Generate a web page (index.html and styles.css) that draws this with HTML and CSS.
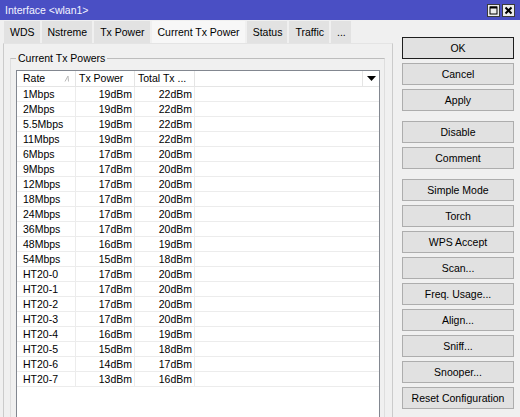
FILE: index.html
```html
<!DOCTYPE html>
<html>
<head>
<meta charset="utf-8">
<link rel="stylesheet" href="styles.css">
</head>
<body>
<div class="window">
  <div class="titlebar">
    <span class="title">Interface &lt;wlan1&gt;</span>
    <div class="controls">
      <svg class="ctl" width="13" height="13" viewBox="0 0 13 13"><rect x="0.5" y="0.5" width="12" height="12" fill="#ececec" stroke="#3a3a3a"/><rect x="3" y="3" width="7" height="7" fill="none" stroke="#000" stroke-width="1"/><line x1="3" y1="3.5" x2="10" y2="3.5" stroke="#000" stroke-width="2"/></svg>
      <svg class="ctl" width="13" height="13" viewBox="0 0 13 13"><rect x="0.5" y="0.5" width="12" height="12" fill="#ececec" stroke="#3a3a3a"/><path d="M3.5 3.5 L9.5 9.5 M9.5 3.5 L3.5 9.5" stroke="#000" stroke-width="2"/></svg>
    </div>
  </div>
  <div class="main">
    <div class="left">
      <div class="tabs">
        <div class="tab">WDS</div>
        <div class="tab">Nstreme</div>
        <div class="tab">Tx Power</div>
        <div class="tab active">Current Tx Power</div>
        <div class="tab">Status</div>
        <div class="tab">Traffic</div>
        <div class="tab">...</div>
      </div>
      <div class="panel">
        <fieldset class="group">
          <legend>Current Tx Powers</legend>
          <div class="list">
            <div class="hrow">
              <div class="hc c1">Rate<svg class="sort" width="6" height="7" viewBox="0 0 6 7"><path d="M1 6.5 L4 1 L4.5 6.5" fill="none" stroke="#b8b8b8" stroke-width="1"/></svg></div>
              <div class="hc">Tx Power</div>
              <div class="hc">Total Tx ...</div>
              <div class="hc"></div>
              <div class="hc drop"><svg width="9" height="5" viewBox="0 0 9 5"><path d="M0 0 H9 L4.5 5 Z" fill="#000"/></svg></div>
            </div>
            <div class="row"><div class="c c1">1Mbps</div><div class="c num">19dBm</div><div class="c num">22dBm</div><div class="c last"></div></div>
            <div class="row"><div class="c c1">2Mbps</div><div class="c num">19dBm</div><div class="c num">22dBm</div><div class="c last"></div></div>
            <div class="row"><div class="c c1">5.5Mbps</div><div class="c num">19dBm</div><div class="c num">22dBm</div><div class="c last"></div></div>
            <div class="row"><div class="c c1">11Mbps</div><div class="c num">19dBm</div><div class="c num">22dBm</div><div class="c last"></div></div>
            <div class="row"><div class="c c1">6Mbps</div><div class="c num">17dBm</div><div class="c num">20dBm</div><div class="c last"></div></div>
            <div class="row"><div class="c c1">9Mbps</div><div class="c num">17dBm</div><div class="c num">20dBm</div><div class="c last"></div></div>
            <div class="row"><div class="c c1">12Mbps</div><div class="c num">17dBm</div><div class="c num">20dBm</div><div class="c last"></div></div>
            <div class="row"><div class="c c1">18Mbps</div><div class="c num">17dBm</div><div class="c num">20dBm</div><div class="c last"></div></div>
            <div class="row"><div class="c c1">24Mbps</div><div class="c num">17dBm</div><div class="c num">20dBm</div><div class="c last"></div></div>
            <div class="row"><div class="c c1">36Mbps</div><div class="c num">17dBm</div><div class="c num">20dBm</div><div class="c last"></div></div>
            <div class="row"><div class="c c1">48Mbps</div><div class="c num">16dBm</div><div class="c num">19dBm</div><div class="c last"></div></div>
            <div class="row"><div class="c c1">54Mbps</div><div class="c num">15dBm</div><div class="c num">18dBm</div><div class="c last"></div></div>
            <div class="row"><div class="c c1">HT20-0</div><div class="c num">17dBm</div><div class="c num">20dBm</div><div class="c last"></div></div>
            <div class="row"><div class="c c1">HT20-1</div><div class="c num">17dBm</div><div class="c num">20dBm</div><div class="c last"></div></div>
            <div class="row"><div class="c c1">HT20-2</div><div class="c num">17dBm</div><div class="c num">20dBm</div><div class="c last"></div></div>
            <div class="row"><div class="c c1">HT20-3</div><div class="c num">17dBm</div><div class="c num">20dBm</div><div class="c last"></div></div>
            <div class="row"><div class="c c1">HT20-4</div><div class="c num">16dBm</div><div class="c num">19dBm</div><div class="c last"></div></div>
            <div class="row"><div class="c c1">HT20-5</div><div class="c num">15dBm</div><div class="c num">18dBm</div><div class="c last"></div></div>
            <div class="row"><div class="c c1">HT20-6</div><div class="c num">14dBm</div><div class="c num">17dBm</div><div class="c last"></div></div>
            <div class="row"><div class="c c1">HT20-7</div><div class="c num">13dBm</div><div class="c num">16dBm</div><div class="c last"></div></div>
          </div>
        </fieldset>
      </div>
    </div>
    <div class="buttons">
      <button class="btn default">OK</button>
      <button class="btn">Cancel</button>
      <button class="btn">Apply</button>
      <button class="btn sep">Disable</button>
      <button class="btn">Comment</button>
      <button class="btn sep">Simple Mode</button>
      <button class="btn">Torch</button>
      <button class="btn">WPS Accept</button>
      <button class="btn">Scan...</button>
      <button class="btn">Freq. Usage...</button>
      <button class="btn">Align...</button>
      <button class="btn">Sniff...</button>
      <button class="btn">Snooper...</button>
      <button class="btn">Reset Configuration</button>
    </div>
  </div>
</div>
</body>
</html>
```
FILE: styles.css
```css
* { box-sizing: border-box; }
html, body { margin: 0; padding: 0; }
body {
  background: #f0f0f0;
  font-family: "Liberation Sans", Arial, sans-serif;
  font-size: 10.5px;
  color: #000;
}
.window {
  width: 520px;
  height: 417px;
  overflow: hidden;
  background: #f0f0f0;
}
.titlebar {
  height: 20px;
  background: #4a4fc4;
  display: flex;
  align-items: center;
  padding-left: 5px;
}
.title {
  color: #f4f4ff;
  font-size: 10.5px;
  flex: 1;
}
.controls {
  display: flex;
  gap: 2px;
  margin-right: 5px;
}
.ctl { display: block; }
.main {
  display: flex;
  align-items: flex-start;
}
.left {
  width: 390px;
  margin-left: 3px;
  padding-top: 1px;
}
.tabs {
  display: flex;
  height: 22px;
  padding-left: 1px;
  gap: 2px;
}
.tab {
  background: #e2e2e2;
  padding: 0 5px 0 6px;
  line-height: 22px;
  height: 22px;
  white-space: nowrap;
}
.tab.active {
  background: #f7f7f7;
}
.panel {
  border: 1px solid #cbcbcb;
  border-top-color: #e4e4e4;
  height: 380px;
  background: #f0f0f0;
}
.group {
  margin: 8px 7px 0 6px;
  padding: 0 4px 0 5px;
  border: 1px solid #dedede;
  border-top-color: #bdbdbd;
  min-width: 0;
}
.group legend {
  padding: 0 2px;
  line-height: 12px;
  height: 12px;
}
.list {
  margin-top: 6px;
  border: 1px solid #828790;
  background: #fff;
  height: 360px;
}
.hrow {
  display: grid;
  grid-template-columns: 59px 59px 60px 168px 16px;
  height: 16px;
  border-bottom: 1px solid #e5e5e5;
}
.hc {
  border-right: 1px solid #e5e5e5;
  line-height: 15px;
  padding-left: 3px;
  white-space: nowrap;
  overflow: hidden;
  display: flex;
  align-items: center;
}
.hc.c1 {
  padding-left: 6px;
  justify-content: space-between;
  padding-right: 5px;
}
.sort { display: block; }
.hc.drop {
  border-right: none;
  padding-left: 0;
  justify-content: center;
}
.hc.drop svg { display: block; }
.row {
  display: grid;
  grid-template-columns: 59px 59px 60px 184px;
  height: 15px;
  border-bottom: 1px solid #ececec;
}
.c {
  border-right: 1px solid #ececec;
  line-height: 14px;
  white-space: nowrap;
}
.c.c1 { padding-left: 6px; }
.c.num { text-align: right; padding-right: 2px; }
.c.last { border-right: none; }
.buttons {
  margin-left: 9px;
  width: 112px;
  padding-top: 17px;
  display: flex;
  flex-direction: column;
}
.btn {
  display: block;
  width: 112px;
  height: 22px;
  margin: 0 0 4px 0;
  padding: 0;
  border: 1px solid #adadad;
  background: #e1e1e1;
  font-family: "Liberation Sans", Arial, sans-serif;
  font-size: 10.5px;
  color: #000;
  text-align: center;
  line-height: 20px;
}
.btn.default {
  border-color: #1e1e1e;
}
.btn.sep {
  margin-top: 6px;
}
```
